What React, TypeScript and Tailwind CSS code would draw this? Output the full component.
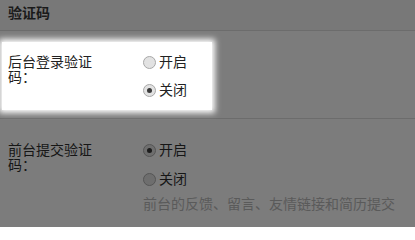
import React from 'react'

function Radio({ checked, dim, label }: { checked: boolean; dim?: boolean; label: string }) {
  return (
    <div className="flex h-[20px] items-center">
      <span
        className={
          dim
            ? 'flex h-[13px] w-[13px] items-center justify-center rounded-full border border-[#555] bg-[#6e6e6e]'
            : 'flex h-[13px] w-[13px] items-center justify-center rounded-full border border-[#a8a8a8] bg-[#e2e2e2]'
        }
      >
        {checked && (
          <span className={dim ? 'h-[5px] w-[5px] rounded-full bg-[#1c1c1c]' : 'h-[5px] w-[5px] rounded-full bg-[#3a3a3a]'} />
        )}
      </span>
      <span className={dim ? 'ml-[3px] text-[#161616]' : 'ml-[3px] text-[#222]'}>{label}</span>
    </div>
  )
}

export default function App() {
  return (
    <div
      className="h-[227px] w-[415px] overflow-hidden bg-[#7c7c7c] text-[14px] leading-[15px]"
      style={{ fontFamily: '"Liberation Sans", "Noto Sans CJK SC", sans-serif' }}
    >
      <div className="flex h-[31px] items-center border-b border-[#6c6c6c] bg-[#787878] px-[8px] pb-[4px] text-[14px] font-bold text-[#1a1a1a]">
        验证码
      </div>

      <div className="h-[88px] border-b border-[#6c6c6c] pt-[11px]">
        <div className="ml-[2px] flex w-[210px] bg-white pb-[10px] pl-[6px] pt-[10px] shadow-[0_0_6px_3px_#ffffff]">
          <div className="mt-[3px] w-[92px] text-[#222]">后台登录验证码：</div>
          <div className="ml-[43px] flex flex-col gap-[8px]">
            <Radio checked={false} label="开启" />
            <Radio checked label="关闭" />
          </div>
        </div>
      </div>

      <div className="flex pl-[8px] pt-[21px]">
        <div className="mt-[3px] w-[92px] text-[#161616]">前台提交验证码：</div>
        <div className="ml-[43px] flex flex-col">
          <div className="flex flex-col gap-[9px]">
            <Radio checked dim label="开启" />
            <Radio checked={false} dim label="关闭" />
          </div>
          <div className="mt-[5px] leading-[20px] text-[#5a5a5a]">前台的反馈、留言、友情链接和简历提交</div>
        </div>
      </div>
    </div>
  )
}
